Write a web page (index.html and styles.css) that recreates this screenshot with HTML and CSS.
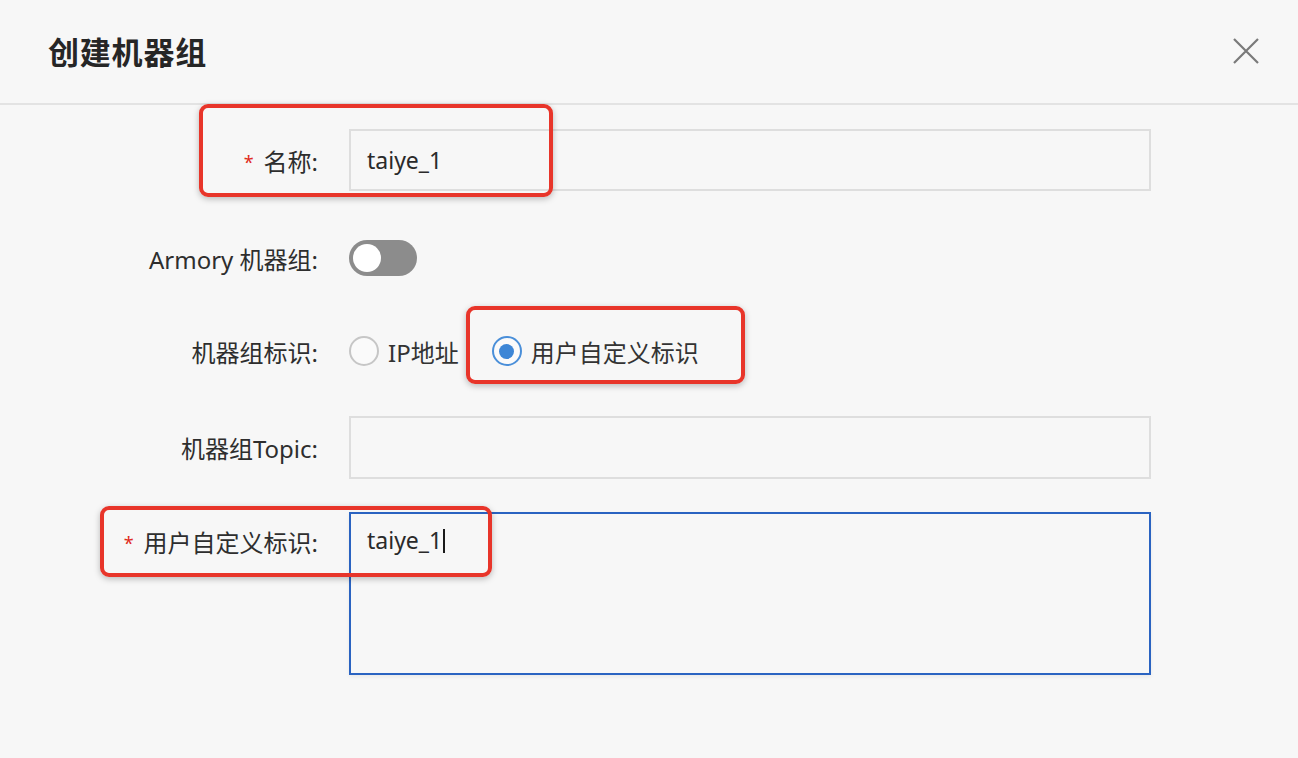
FILE: index.html
```html
<!DOCTYPE html>
<html lang="zh-CN">
<head>
    <meta charset="UTF-8">
    <meta name="viewport" content="width=device-width, initial-scale=1.0">
    <title>创建机器组</title>
    <link rel="stylesheet" href="styles.css">
</head>
<body>
    <div class="dialog">
        <div class="dialog-header">
            <h1>创建机器组</h1>
            <button class="close-btn" aria-label="关闭">
                <svg width="26" height="26" viewBox="0 0 26 26">
                    <path d="M1 1 L25 25 M25 1 L1 25" stroke="#7a7a7a" stroke-width="2.2" fill="none"/>
                </svg>
            </button>
        </div>

        <!-- 表单 -->
        <div class="form">
            <div class="row row-name">
                <label class="label"><span class="req">*</span>名称:</label>
                <div class="field"><div class="input">taiye_1</div></div>
            </div>

            <div class="row row-switch">
                <label class="label">Armory 机器组:</label>
                <div class="field"><span class="switch"><span class="knob"></span></span></div>
            </div>

            <div class="row row-radio">
                <label class="label">机器组标识:</label>
                <div class="field radios">
                    <span class="radio"><span class="dot"></span>IP地址</span>
                    <span class="radio checked"><span class="dot"></span>用户自定义标识</span>
                </div>
            </div>

            <div class="row row-topic">
                <label class="label">机器组Topic:</label>
                <div class="field"><div class="input"></div></div>
            </div>

            <div class="row row-custom">
                <label class="label"><span class="req">*</span>用户自定义标识:</label>
                <div class="field"><div class="textarea">taiye_1<span class="caret"></span></div></div>
            </div>
        </div>

        <!-- 标注框 -->
        <div class="mark mark-1"></div>
        <div class="mark mark-2"></div>
        <div class="mark mark-3"></div>
    </div>
</body>
</html>
```

FILE: styles.css
```css
/* 基础 */
html, body {
    margin: 0;
    padding: 0;
    background: #f7f7f7;
}

body {
    font-family: "Noto Sans", "Noto Sans CJK SC", sans-serif;
    color: #333;
}

.dialog {
    position: relative;
    width: 1298px;
    height: 758px;
    overflow: hidden;
}

.dialog-header {
    height: 103px;
    border-bottom: 2px solid #e3e3e3;
    display: flex;
    align-items: center;
    justify-content: space-between;
    padding: 0 39px 0 48px;
}

.dialog-header h1 {
    margin: 0 0 2px 0;
    font-size: 31px;
    font-weight: 700;
    color: #262626;
    letter-spacing: 0.8px;
}

.close-btn {
    background: none;
    border: none;
    padding: 0;
    width: 26px;
    height: 26px;
    cursor: pointer;
    margin-bottom: 2px;
}

/* 表单行 */
.form {
    padding-top: 24px;
    display: flex;
    flex-direction: column;
}

.row {
    display: flex;
    align-items: center;
    font-size: 24px;
}

.row-name { height: 62px; }
.row-switch { height: 62px; margin-top: 36px; }
.row-radio { height: 62px; margin-top: 31px; }
.row-topic { height: 63px; margin-top: 34px; }
.row-custom { align-items: flex-start; margin-top: 33px; }

.label {
    width: 349px;
    box-sizing: border-box;
    padding-right: 31px;
    text-align: right;
    color: #2e2e2e;
}

.row-custom .label {
    line-height: 62px;
}

.req {
    color: #e02a20;
    font-size: 18px;
    margin-right: 10px;
    position: relative;
    top: -2px;
}

.field {
    width: 802px;
}

.input {
    height: 62px;
    box-sizing: border-box;
    border: 2px solid #dedede;
    padding: 0 16px;
    line-height: 58px;
    font-size: 23px;
    color: #2a2a2a;
}

.row-topic .input {
    height: 63px;
}

.textarea {
    height: 163px;
    box-sizing: border-box;
    border: 2px solid #2a63c1;
    padding: 10px 16px;
    line-height: 32px;
    font-size: 23px;
    color: #2a2a2a;
    box-shadow: 0 2px 4px rgba(0, 0, 0, 0.06);
}

.caret {
    display: inline-block;
    width: 2px;
    height: 24px;
    background: #1a1a1a;
    vertical-align: -4px;
    margin-left: 1px;
}

/* 开关 */
.switch {
    display: block;
    position: relative;
    width: 68px;
    height: 36px;
    border-radius: 18px;
    background: #8c8c8c;
}

.knob {
    position: absolute;
    left: 4px;
    top: 4px;
    width: 28px;
    height: 28px;
    border-radius: 50%;
    background: #fff;
}

/* 单选 */
.radios {
    display: flex;
    align-items: center;
    gap: 33px;
}

.radio {
    display: flex;
    align-items: center;
    gap: 9px;
    font-size: 24px;
}

.dot {
    width: 30px;
    height: 30px;
    box-sizing: border-box;
    border: 2px solid #c6c6c6;
    border-radius: 50%;
    background: #fafafa;
    display: flex;
    align-items: center;
    justify-content: center;
}

.radio.checked .dot {
    border-color: #4a8fd9;
}

.radio.checked .dot::after {
    content: "";
    width: 15px;
    height: 15px;
    border-radius: 50%;
    background: #3d86d6;
}

/* 红色标注框 */
.mark {
    position: absolute;
    border: 4px solid #e8352a;
    border-radius: 9px;
    box-shadow: 0 2px 6px rgba(0, 0, 0, 0.25);
    box-sizing: border-box;
}

.mark-1 { left: 199px; top: 104px; width: 354px; height: 93px; }
.mark-2 { left: 466px; top: 306px; width: 279px; height: 78px; }
.mark-3 { left: 100px; top: 506px; width: 392px; height: 71px; }
```
